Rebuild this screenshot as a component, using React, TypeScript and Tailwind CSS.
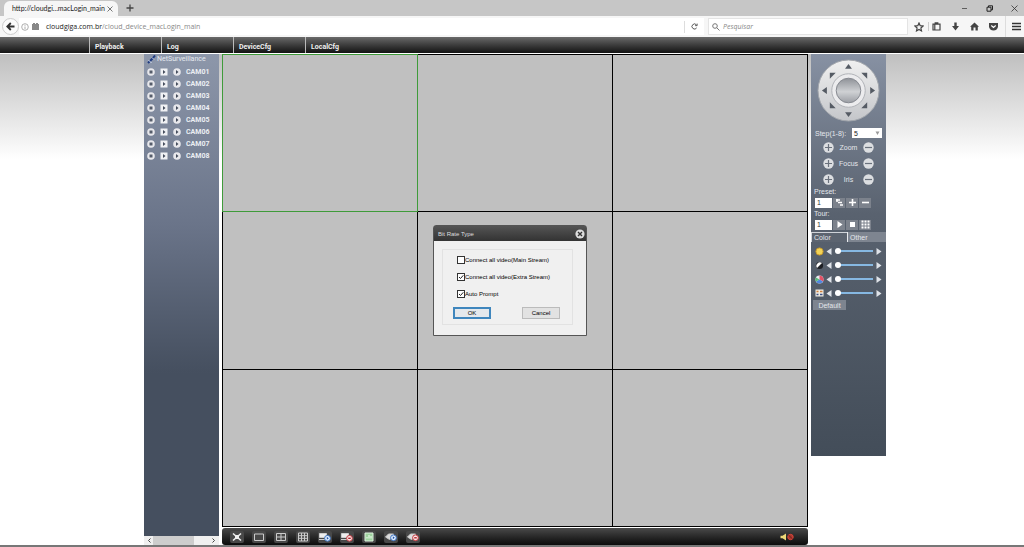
import { useState } from 'react';
import type { ReactNode } from 'react';
import clsx from 'clsx';

const MENU = ['Playback', 'Log', 'DeviceCfg', 'LocalCfg'];
const CAMERAS = ['CAM01', 'CAM02', 'CAM03', 'CAM04', 'CAM05', 'CAM06', 'CAM07', 'CAM08'];
const LENS = ['Zoom', 'Focus', 'Iris'];

function BrowserChrome() {
  return (
    <header className="font-['Open_Sans',sans-serif] text-[7px] text-[#222]">
      <div className="flex h-4 items-end bg-[#c6c6c6]">
        <div className="ml-1 flex h-[15px] w-[114px] items-center justify-between rounded-t-md bg-[#f6f6f6] pr-[5px] pl-2">
          <span className="font-['Lato',sans-serif] whitespace-nowrap">http://cloudgi...macLogin_main</span>
          <button aria-label="Close tab">
            <svg className="size-[6px]" viewBox="0 0 6 6" stroke="#555" strokeWidth="0.8">
              <path d="M0.5 0.5l5 5M5.5 0.5l-5 5" />
            </svg>
          </button>
        </div>
        <button aria-label="New tab" className="mb-1 ml-2">
          <svg className="size-[8px]" viewBox="0 0 8 8" stroke="#444" strokeWidth="1.3">
            <path d="M4 0.5v7M0.5 4h7" />
          </svg>
        </button>
        <div className="ml-auto flex h-4 items-center gap-[18px] pr-1.5">
          <button aria-label="Minimize">
            <svg className="size-[7px]" viewBox="0 0 7 7" stroke="#444" strokeWidth="0.8">
              <path d="M1 3.5h5" />
            </svg>
          </button>
          <button aria-label="Restore">
            <svg className="size-[7px]" viewBox="0 0 7 7" fill="none" stroke="#222">
              <path d="M1 2.2h4v4H1zM2.5 2V0.8h4v4H5" />
            </svg>
          </button>
          <button aria-label="Close">
            <svg className="size-[7px]" viewBox="0 0 7 7" stroke="#333" strokeWidth="0.8">
              <path d="M0.5 0.5l6 6M6.5 0.5l-6 6" />
            </svg>
          </button>
        </div>
      </div>

      <div className="flex h-[21px] items-center bg-[#f6f6f6]">
        <button
          aria-label="Back"
          className="ml-0.5 flex size-[17px] shrink-0 items-center justify-center rounded-full border border-[#ccc] bg-[#fbfbfb]"
        >
          <svg className="size-[9px]" viewBox="0 0 9 9" fill="none" stroke="#333" strokeWidth="1.8">
            <path d="M8.5 4.5H1.5M4.8 1L1.3 4.5l3.5 3.5" />
          </svg>
        </button>
        <div className="flex h-[17px] flex-1 items-center bg-white pl-0.5">
          <svg className="size-[8px]" viewBox="0 0 8 8" fill="none" stroke="#999" strokeWidth="0.8">
            <circle cx="4" cy="4" r="3.3" />
            <path d="M4 3.5v2.5M4 1.9v0.9" />
          </svg>
          <svg className="ml-0.5 size-[9px]" viewBox="0 0 9 9" fill="#888">
            <path d="M1 2h7v6H1zM2 1h2v1.5H2zM5 1h2v1.500H5z" />
          </svg>
          <p className="ml-1.5 text-[#888]">
            <span className="text-[#222]">cloudgiga.com.br</span>/cloud_device_macLogin_main
          </p>
          <button
            aria-label="Reload"
            className="ml-auto flex h-3 w-[20px] items-center justify-center border-l border-[#ddd]"
          >
            <svg className="size-[7px]" viewBox="0 0 8 8" fill="none" stroke="#555" strokeWidth="1.1">
              <path d="M6.5 5.500A2.900 2.900 0 1 1 6.3 2.200M7 0.700v2.300H4.700" />
            </svg>
          </button>
        </div>
        <label className="ml-1 flex h-[17px] w-[200px] items-center gap-[3px] border border-[#e4e4e4] bg-white pl-[3px]">
          <svg className="size-[8px] shrink-0" viewBox="0 0 8 8" fill="none" stroke="#777">
            <circle cx="3" cy="3" r="2.3" />
            <path d="M4.7 4.7L7.5 7.5" />
          </svg>
          <input
            aria-label="Search"
            placeholder="Pesquisar"
            className="w-full text-[7px] italic outline-none placeholder:text-[#888]"
          />
        </label>
        <div className="flex h-full items-center pl-1.5">
          <button aria-label="Bookmark" className="w-3.5">
            <svg className="size-[10px]" viewBox="0 0 10 10" fill="none" stroke="#444" strokeWidth="1.2">
              <path d="M5 1l1.2 2.7 2.9.3-2.200 2 .6 2.900L5 7.400 2.500 8.900l.6-2.900-2.200-2 2.900-.3z" />
            </svg>
          </button>
          <button aria-label="Bookmarks list" className="w-[23px] border-l border-[#ccc] pl-[3px]">
            <svg className="size-[9px]" viewBox="0 0 9 9" fill="none" stroke="#444" strokeWidth="1.2">
              <path d="M1 2.200h7v5.800H1zM3.200 2V0.800h2.600V2M2.800 2.500v5.500" />
            </svg>
          </button>
          <button aria-label="Downloads" className="w-[19px]">
            <svg className="size-[9px]" viewBox="0 0 9 9" fill="#444">
              <path d="M3.300 0.500h2.400v3.500h2.300L4.500 8.500 1 4h2.300z" />
            </svg>
          </button>
          <button aria-label="Home" className="w-[19px]">
            <svg className="size-[9px]" viewBox="0 0 9 9" fill="#444">
              <path d="M4.500 0.500L9 4.800H7.800v3.700H5.500V5.500h-2v3H1.200V4.800H0z" />
            </svg>
          </button>
          <button aria-label="Pocket" className="w-4">
            <svg className="size-[9px]" viewBox="0 0 9 9" fill="#444">
              <path d="M0 1h9v3.500a4.500 4 0 0 1-9 0z" />
              <path d="M2.300 3.500l2.200 2 2.200-2" fill="none" stroke="#fff" strokeWidth="1.1" />
            </svg>
          </button>
          <button aria-label="Menu" className="flex h-full w-[19px] items-center border-l border-[#ddd] pl-1.5">
            <svg className="size-[9px]" viewBox="0 0 9 9" stroke="#333" strokeWidth="1.5">
              <path d="M0 1.500h9M0 4.500h9M0 7.500h9" />
            </svg>
          </button>
        </div>
      </div>
    </header>
  );
}

function CameraTree() {
  return (
    <aside className="flex w-[75px] flex-col bg-linear-to-b from-[#8d97aa] via-[#6a7489] via-35% to-[#454f5f] to-65% font-['Roboto',sans-serif]">
      <div className="mb-px flex h-[11px] items-center gap-px pl-[3px] whitespace-nowrap text-[#e6eaf0]">
        <svg className="size-[9px]" viewBox="0 0 9 9">
          <path d="M1 8l5-5 2-2.500" stroke="#203c80" strokeWidth="2" fill="none" />
          <path d="M1.500 5l3 3M5 2.500l2 2" stroke="#d8e2f6" fill="none" />
        </svg>
        NetSurveillance
      </div>
      <ul>
        {CAMERAS.map((name) => (
          <li key={name} className="flex h-3 items-center gap-[5px] pl-[3px] font-bold text-[#eceff4]">
            <svg className="size-[8px]" viewBox="0 0 8 8">
              <circle cx="4" cy="4" r="3.8" fill="#e8e8ec" />
              <rect x="2.5" y="2.5" width="3" height="3" fill="#555c6a" />
            </svg>
            <svg className="size-[8px]" viewBox="0 0 8 8">
              <rect x="0.5" y="0.5" width="7" height="7" fill="#f0f1f4" />
              <path d="M3 2l2.500 2L3 6z" fill="#444c5c" />
            </svg>
            <svg className="size-[8px]" viewBox="0 0 8 8">
              <circle cx="4" cy="4" r="3.8" fill="#e8e8ec" />
              <path d="M3 2l2.500 2L3 6z" fill="#444c5c" />
            </svg>
            {name}
          </li>
        ))}
      </ul>
      <div className="mt-auto flex h-[9px] items-center justify-between bg-[#f0f0f0] px-[3px]">
        <svg className="size-[5px]" viewBox="0 0 5 5" fill="none" stroke="#444">
          <path d="M3.500 0.500l-2 2 2 2" />
        </svg>
        <div className="mr-4 h-full w-[41px] bg-[#cdcdcd]" />
        <svg className="size-[5px]" viewBox="0 0 5 5" fill="none" stroke="#444">
          <path d="M1.500 0.500l2 2-2 2" />
        </svg>
      </div>
    </aside>
  );
}

function BitRateDialog() {
  const [streams, setStreams] = useState({ main: false, extra: true, prompt: true });
  const options = [
    { key: 'main', label: 'Connect all video(Main Stream)' },
    { key: 'extra', label: 'Connect all video(Extra Stream)' },
    { key: 'prompt', label: 'Auto Prompt' },
  ] as const;

  return (
    <div
      role="dialog"
      aria-label="Bit Rate Type"
      className="absolute top-[171px] left-[211px] w-[154px] rounded-t-[3px] border border-[#555] bg-[#f0f0f0] text-[6px] text-black"
    >
      <div className="flex h-[15px] items-center justify-between bg-linear-to-b from-[#555] to-[#333] pr-px pl-1 text-[#ddd]">
        Bit Rate Type
        <button aria-label="Close dialog">
          <svg className="size-[10px]" viewBox="0 0 10 10">
            <circle cx="5" cy="5" r="4.6" fill="#ddd" />
            <path d="M3 3l4 4M7 3L3 7" stroke="#333" strokeWidth="1.4" />
          </svg>
        </button>
      </div>
      <div className="mt-2 mr-[13px] mb-2.5 ml-2 border border-[#e2e2e2] pt-px pb-[5px]">
        {options.map(({ key, label }) => (
          <label key={key} className="flex h-[17px] items-center pl-3.5 whitespace-nowrap">
            <span className="relative flex size-[8px] shrink-0">
              <input
                type="checkbox"
                checked={streams[key]}
                onChange={(e) => setStreams({ ...streams, [key]: e.target.checked })}
                className="peer size-[8px] appearance-none border border-[#333] bg-white"
              />
              <svg
                className="pointer-events-none absolute inset-0 hidden size-[8px] peer-checked:block"
                viewBox="0 0 8 8"
                fill="none"
                stroke="#222"
              >
                <path d="M2 4l1.500 1.500L6.300 2.300" />
              </svg>
            </span>
            {label}
          </label>
        ))}
        <div className="mt-[5px] flex justify-between pr-3 pl-2.5">
          <button className="h-3 w-[38px] border-2 border-[#3f86bd] bg-[#e4e8ec] leading-none">OK</button>
          <button className="h-3 w-[38px] border border-[#bbb] bg-[#e2e2e2] leading-none">Cancel</button>
        </div>
      </div>
    </div>
  );
}

function ToolButton({ label, children }: { label: string; children: ReactNode }) {
  return (
    <button aria-label={label} className="flex h-3 w-[14px] items-center justify-center rounded-xs bg-[#484848]">
      <svg className="h-[10px] w-3" viewBox="0 0 12 10" fill="none" stroke="#ccc">
        {children}
      </svg>
    </button>
  );
}

function BottomBar() {
  return (
    <div className="mt-px flex h-[17px] items-center gap-2 rounded-[3px] bg-linear-to-b from-[#4a4a4a] to-[#0c0c0c] pr-3.5 pl-2">
      <ToolButton label="Full screen">
        <path d="M2 1.500l8 7M10 1.500l-8 7" strokeWidth="1.6" stroke="#eee" />
        <path d="M4 3h4v4H4z" fill="#eee" stroke="none" />
      </ToolButton>
      <ToolButton label="Single view">
        <path d="M1.500 2h9v6.500h-9z" />
      </ToolButton>
      <ToolButton label="Four views">
        <path d="M1.500 1.500h9v7h-9zM6 1.500v7M1.500 5h9" />
      </ToolButton>
      <ToolButton label="Nine views">
        <path d="M1.500 1h9v8h-9zM4.500 1v8M7.500 1v8M1.500 3.700h9M1.500 6.300h9" />
      </ToolButton>
      <ToolButton label="Connect all">
        <path d="M0.500 1.500h7v4h-7z" fill="#eee" />
        <path d="M0 7.500h7" />
        <circle cx="8.5" cy="6.3" r="2.9" fill="#e3efff" stroke="#3a72c0" />
        <path d="M7.800 4.800l2 1.500-2 1.500z" fill="#2457a8" stroke="none" />
      </ToolButton>
      <ToolButton label="Disconnect all">
        <path d="M0.500 1.500h7v4h-7z" fill="#eee" />
        <path d="M0 7.500h7" />
        <circle cx="8.5" cy="6.3" r="2.9" fill="#fbe4e4" stroke="#c43a40" />
        <path d="M7.200 6.300h2.600" stroke="#b01820" strokeWidth="1.3" />
      </ToolButton>
      <ToolButton label="Snapshot">
        <path d="M2 1h8v8H2z" fill="#9ed29e" stroke="#dff2df" />
        <path d="M4 6.500V5M6 6.500V3M8 6.500V4" stroke="#f3fff3" />
      </ToolButton>
      <ToolButton label="Start record">
        <path d="M0.500 5l3-3h5v3l-4 2.500z" fill="#ddd" />
        <circle cx="8.5" cy="5.8" r="2.9" fill="#e3efff" stroke="#3a72c0" />
        <path d="M7.800 4.300l2 1.500-2 1.500z" fill="#2457a8" stroke="none" />
      </ToolButton>
      <ToolButton label="Stop record">
        <path d="M0.500 5l3-3h5v3l-4 2.500z" fill="#ddd" />
        <circle cx="8.5" cy="5.8" r="2.9" fill="#fbe4e4" stroke="#c43a40" />
        <path d="M7.200 5.800h2.600" stroke="#b01820" strokeWidth="1.3" />
      </ToolButton>
      <button aria-label="Mute" className="ml-auto">
        <svg className="h-[8px] w-[14px]" viewBox="0 0 14 8">
          <path d="M0.500 2.700h2L6 0.500v7L2.500 5.300h-2z" fill="#eed878" />
          <circle cx="10.5" cy="4" r="2.7" fill="#a83a30" stroke="#d8443a" />
          <path d="M8.700 2.200l3.600 3.600" stroke="#6d1a16" />
        </svg>
      </button>
    </div>
  );
}

function PtzWheel() {
  return (
    <svg className="mx-auto size-[63px]" viewBox="0 0 64 64" role="img" aria-label="Pan and tilt">
      <defs>
        <linearGradient id="ring" x1="0" y1="0" x2="0" y2="1">
          <stop offset="0" stopColor="#f0f0f0" />
          <stop offset="1" stopColor="#c4c6ca" />
        </linearGradient>
        <linearGradient id="knob" x1="0" y1="0" x2="0" y2="1">
          <stop offset="0" stopColor="#8e9197" />
          <stop offset="0.55" stopColor="#cfd1d4" />
          <stop offset="1" stopColor="#9b9ea4" />
        </linearGradient>
      </defs>
      <circle cx="32" cy="32" r="31" fill="url(#ring)" stroke="#a2a6ac" />
      <circle cx="32" cy="32" r="17" fill="#ececee" stroke="#b0b2b7" />
      <circle cx="32" cy="32" r="12.5" fill="url(#knob)" stroke="#85888f" />
      <g fill="#555b64">
        <path d="M32 5l3.500 5h-7z" />
        <path d="M32 59l3.500-5h-7z" />
        <path d="M5 32l5-3.500v7z" />
        <path d="M59 32l-5-3.500v7z" />
        <path d="M13 14h6l-6 6z" />
        <path d="M51 14h-6l6 6z" />
        <path d="M13 50h6l-6-6z" />
        <path d="M51 50h-6l6-6z" />
      </g>
    </svg>
  );
}

function RoundButton({ label, plus = false }: { label: string; plus?: boolean }) {
  return (
    <button aria-label={label}>
      <svg className="size-[11px]" viewBox="0 0 11 11">
        <circle cx="5.5" cy="5.5" r="5.2" fill="#dcdee1" />
        <path d={plus ? 'M5.500 2v7M2 5.500h7' : 'M2 5.500h7'} stroke="#6a717c" strokeWidth="1.2" />
      </svg>
    </button>
  );
}

function SquareButton({ label, d, fill = true }: { label: string; d: string; fill?: boolean }) {
  return (
    <button aria-label={label} className="flex h-[10px] w-3 items-center justify-center bg-[#7c828c]">
      <svg
        className="size-[9px]"
        viewBox="0 0 9 9"
        fill={fill ? '#fff' : 'none'}
        stroke={fill ? 'none' : '#fff'}
        strokeWidth="1.5"
      >
        <path d={d} />
      </svg>
    </button>
  );
}

const SLIDERS: { name: string; icon: ReactNode }[] = [
  { name: 'Brightness', icon: <circle cx="4.5" cy="4.5" r="3.6" fill="#f2d358" stroke="#c79a2a" /> },
  {
    name: 'Contrast',
    icon: (
      <>
        <circle cx="4.5" cy="4.5" r="3.6" fill="#1d1f24" />
        <path d="M7 2A3.600 3.600 0 0 0 2 7z" fill="#fff" />
      </>
    ),
  },
  {
    name: 'Saturation',
    icon: (
      <>
        <circle cx="4.5" cy="4.5" r="4" fill="#e9e9f2" />
        <path d="M4.500 4.500V0.500a4 4 0 0 1 3.500 6z" fill="#e25266" />
        <path d="M4.500 4.500l3.500 2a4 4 0 0 1-7 0z" fill="#4f86de" />
        <path d="M4.500 4.500L1 6.500a4 4 0 0 1 0-4z" fill="#5cc07a" />
      </>
    ),
  },
  {
    name: 'Hue',
    icon: (
      <>
        <rect x="0.5" y="0.5" width="8" height="7" fill="#f0ede4" />
        <path d="M1.500 2.500h2M5 2.500h2.500" stroke="#d0803c" strokeWidth="1.5" />
        <path d="M1.500 5.500h2M5 5.500h2.500" stroke="#3a4f86" strokeWidth="1.5" />
      </>
    ),
  },
];

function PtzPanel() {
  const [levels, setLevels] = useState([0, 0, 0, 0]);

  return (
    <aside className="ml-[3px] flex h-[402px] w-[75px] flex-col self-start bg-linear-to-b from-[#8791a3] via-[#59626f] via-40% to-[#434d59] pt-[5px] text-[#e4e7ec]">
      <PtzWheel />
      <div className="mt-[5px] flex h-3 items-center justify-between px-1">
        <label htmlFor="step">Step(1-8):</label>
        <div className="relative flex">
          <select
            id="step"
            defaultValue="5"
            className="h-[10px] w-[30px] appearance-none bg-white pl-0.5 leading-none text-[#222]"
          >
            {[1, 2, 3, 4, 5, 6, 7, 8].map((n) => (
              <option key={n}>{n}</option>
            ))}
          </select>
          <svg className="pointer-events-none absolute top-[3px] right-0.5 size-[5px]" viewBox="0 0 5 5" fill="#999">
            <path d="M0.500 0.500h4L2.500 4z" />
          </svg>
        </div>
      </div>
      {LENS.map((name) => (
        <div key={name} className="flex h-4 items-center justify-between px-3">
          <RoundButton plus label={`${name} in`} />
          {name}
          <RoundButton label={`${name} out`} />
        </div>
      ))}
      <label htmlFor="preset" className="pl-[3px] leading-[9px]">
        Preset:
      </label>
      <div className="flex h-[13px] items-center gap-px pl-1">
        <input id="preset" defaultValue="1" className="h-[10px] w-[17px] bg-white px-0.5 text-[#333]" />
        <SquareButton label="Go to preset" fill={false} d="M1 2h4M3 4.500h4M5 7h3M2 1v3" />
        <SquareButton label="Add preset" d="M3.700 1h1.600v2.700H8v1.600H5.300V8H3.700V5.300H1V3.700h2.700z" />
        <SquareButton label="Remove preset" d="M1 3.700h7v1.600H1z" />
      </div>
      <label htmlFor="tour" className="pl-[3px] leading-[9px]">
        Tour:
      </label>
      <div className="flex h-[13px] items-center gap-px pl-1">
        <input id="tour" defaultValue="1" className="h-[10px] w-[17px] bg-white px-0.5 text-[#333]" />
        <SquareButton label="Start tour" d="M2.500 1L7.500 4.500l-5 3.500z" />
        <SquareButton label="Stop tour" d="M2 2h5v5H2z" />
        <SquareButton
          label="Edit tour"
          d="M0.500 0.500h2v2h-2zM3.500 0.500h2v2h-2zM6.500 0.500h2v2h-2zM0.500 3.500h2v2h-2zM3.500 3.500h2v2h-2zM6.500 3.500h2v2h-2zM0.500 6.500h2v2h-2zM3.500 6.500h2v2h-2zM6.500 6.500h2v2h-2z"
        />
      </div>
      <div className="mt-px flex h-[10px] bg-[#7e8590]">
        <button className="w-9 border-t border-l border-[#cfd3d9] bg-[#5c6470] pl-0.5 text-left leading-[9px]">
          Color
        </button>
        <button className="flex-1 border-l border-[#e8eaee] pl-0.5 text-left leading-[9px]">Other</button>
      </div>
      <div className="mt-0.5">
        {SLIDERS.map(({ name, icon }, i) => (
          <div key={name} className="flex h-3.5 items-center px-1">
            <svg className="size-[9px] shrink-0" viewBox="0 0 9 9">
              {icon}
            </svg>
            <svg className="ml-0.5 h-[7px] w-[6px] shrink-0" viewBox="0 0 6 7" fill="#dfe3e9">
              <path d="M5.500 0v7L0.500 3.500z" />
            </svg>
            <input
              type="range"
              aria-label={name}
              value={levels[i]}
              onChange={(e) => setLevels(levels.map((v, j) => (j === i ? Number(e.target.value) : v)))}
              className="mx-[3px] h-0.5 w-full min-w-0 appearance-none bg-[#86b8e2] [&::-webkit-slider-thumb]:size-[6px] [&::-webkit-slider-thumb]:appearance-none [&::-webkit-slider-thumb]:rounded-full [&::-webkit-slider-thumb]:bg-white"
            />
            <svg className="h-[7px] w-[6px] shrink-0" viewBox="0 0 6 7" fill="#dfe3e9">
              <path d="M0.500 0v7l5-3.500z" />
            </svg>
          </div>
        ))}
      </div>
      <button className="ml-0.5 h-[10px] w-[33px] bg-[#7d848f] leading-none">Default</button>
    </aside>
  );
}

export default function App() {
  return (
    <div className="flex min-h-screen flex-col border-b-2 border-[#777] bg-white font-['Liberation_Sans',Arial,sans-serif] text-[7px] leading-none">
      <BrowserChrome />
      <nav className="flex h-4 bg-linear-to-b from-[#6a6a6a] to-[#141414] pl-[89px] font-['Roboto',sans-serif] font-bold text-[#f0f0f0]">
        {MENU.map((item) => (
          <a key={item} href="#" className="flex w-[72px] items-center border-l border-[#bbb] pt-1 pl-[5px]">
            {item}
          </a>
        ))}
      </nav>
      <main className="mt-px flex flex-1 bg-linear-to-b from-[#bfbfbf] to-white to-[105px] pl-36">
        <CameraTree />
        <section className="ml-[3px] flex w-[586px] flex-col bg-white">
          <div className="relative grid flex-1 grid-cols-3 grid-rows-3 gap-px bg-black p-px">
            {Array.from({ length: 9 }, (_, i) => (
              <div key={i} className={clsx('bg-[#c0c0c0]', i === 0 && 'z-10 outline outline-[#3f9b3a]')} />
            ))}
            <BitRateDialog />
          </div>
          <BottomBar />
        </section>
        <PtzPanel />
      </main>
    </div>
  );
}
